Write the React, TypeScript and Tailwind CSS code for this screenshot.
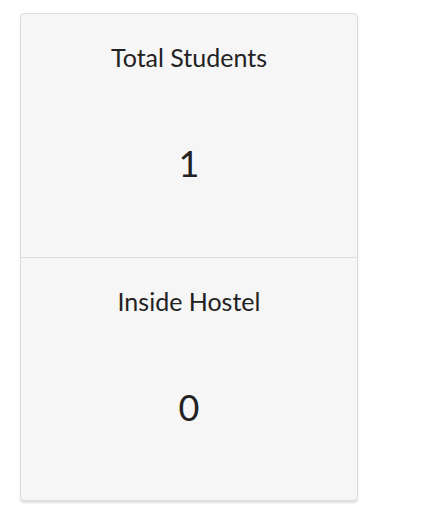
export default function App() {
  const stats = [
    { label: "Total Students", value: 1 },
    { label: "Inside Hostel", value: 0 },
  ]

  return (
    <div className="min-h-[513px] bg-white pt-[13px] pl-[20px] font-['Lato',sans-serif] text-[#222]">
      <div className="w-[338px] rounded-[4px] border border-[#dddddd] bg-[#f6f6f6] shadow-[0_2px_2px_rgba(0,0,0,0.12)]">
        {stats.map((stat, index) => (
          <div
            key={index}
            className={`flex flex-col items-center pt-[28px] ${index === 0 ? "h-[244px] border-b border-[#dddddd]" : "h-[242px]"}`}
          >
            <h3 className="text-[25px] leading-[30px]">{stat.label}</h3>
            <p className="mt-[71px] text-[36px] leading-[40px]">{stat.value}</p>
          </div>
        ))}
      </div>
    </div>
  )
}
